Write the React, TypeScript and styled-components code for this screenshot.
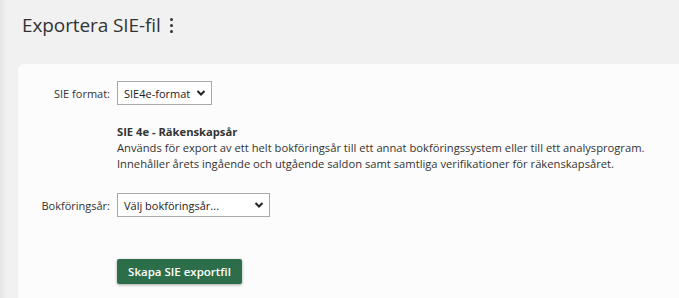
import React from "react";
import styled, { createGlobalStyle } from "styled-components";

const GlobalStyle = createGlobalStyle`
    html, body {
        margin: 0;
        padding: 0;
        background: #f1f1f1;
        font-family: "Open Sans", "Liberation Sans", sans-serif;
        color: #333;
    }
`

const Page = styled.div`
    height: 298px;
    padding-left: 18px;
    overflow: hidden;
    background: linear-gradient(90deg, #e6e6e6 0px, #f1f1f1 7px);
`

const Header = styled.div`
    display: flex;
    align-items: center;
    height: 64px;
    padding-left: 4px;
    box-sizing: border-box;
    padding-bottom: 14px;
    column-gap: 9px;
`

const Title = styled.h1`
    margin: 0;
    font-size: 19px;
    font-weight: 400;
    color: #333;
    letter-spacing: -0.1px;
`

const Kebab = styled.span`
    display: flex;
    flex-direction: column;
    row-gap: 3px;
    span {
        width: 3px;
        height: 3px;
        border-radius: 50%;
        background: #333;
    }
`

const Card = styled.div`
    background: #fcfcfc;
    border-radius: 6px 0 0 0;
    padding: 17px 0 0 0;
    height: 234px;
    box-sizing: border-box;
`

const Row = styled.div<{ top?: number }>`
    display: grid;
    grid-template-columns: 92px 1fr;
    column-gap: 7px;
    align-items: center;
    margin-top: ${props => props.top || 0}px;
`

const Label = styled.label`
    text-align: right;
    font-size: 11px;
    color: #333;
`

const SelectBox = styled.div<{ width: number }>`
    display: flex;
    align-items: center;
    justify-content: space-between;
    width: ${props => props.width}px;
    height: 24px;
    box-sizing: border-box;
    border: 1px solid #a9a9a9;
    background: #fff;
    padding: 0 5px 0 6px;
    font-size: 11px;
    color: #222;
`

const Info = styled.div`
    grid-column: 2;
    font-size: 11.2px;
    line-height: 16px;
    color: #333;
    strong {
        font-weight: 700;
    }
`

const Button = styled.button`
    grid-column: 2;
    justify-self: start;
    width: 125px;
    height: 25px;
    border: 0;
    border-radius: 2px;
    background: #2c6e49;
    color: #fff;
    font-family: "Open Sans", "Liberation Sans", sans-serif;
    font-size: 11.5px;
    font-weight: 600;
    box-shadow: 0 1px 3px rgba(0,0,0,0.35);
`

const Chevron = () => (
    <svg width="10" height="8" viewBox="0 0 10 8">
        <path d="M1.5 2 L5 5.5 L8.5 2" fill="none" stroke="#222" strokeWidth="2" />
    </svg>
)

const App = () => {
    return (
        <Page>
            <GlobalStyle />
            <Header>
                <Title>Exportera SIE-fil</Title>
                <Kebab><span /><span /><span /></Kebab>
            </Header>
            <Card>
                <Row>
                    <Label>SIE format:</Label>
                    <SelectBox width={95}>SIE4e-format <Chevron /></SelectBox>
                </Row>
                <Row top={19}>
                    <Info>
                        <strong>SIE 4e - Räkenskapsår</strong><br />
                        Används för export av ett helt bokföringsår till ett annat bokföringssystem eller till ett analysprogram.<br />
                        Innehåller årets ingående och utgående saldon samt samtliga verifikationer för räkenskapsåret.
                    </Info>
                </Row>
                <Row top={21}>
                    <Label>Bokföringsår:</Label>
                    <SelectBox width={153}>Välj bokföringsår... <Chevron /></SelectBox>
                </Row>
                <Row top={42}>
                    <Button>Skapa SIE exportfil</Button>
                </Row>
            </Card>
        </Page>
    )
}

export default App;
